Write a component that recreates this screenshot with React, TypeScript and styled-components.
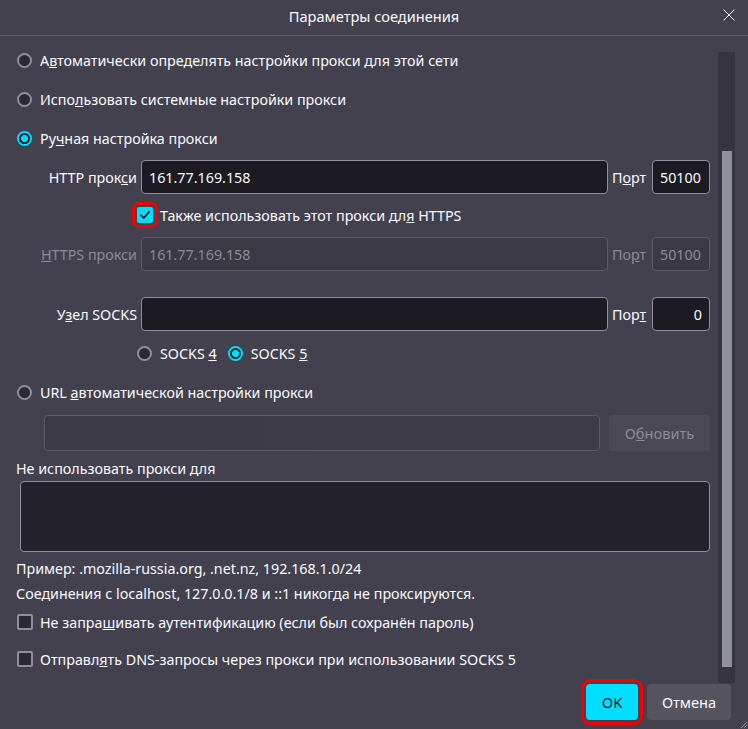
import React from "react";
import styled, { createGlobalStyle } from "styled-components";

const GlobalStyle = createGlobalStyle`
  html, body {
    margin: 0;
    padding: 0;
    background: #42414d;
  }
  body {
    font-family: "Noto Sans", "Open Sans", sans-serif;
    color: #fbfbfe;
  }
  * {
    box-sizing: border-box;
  }
`;

const Dialog = styled.div`
  position: relative;
  width: 748px;
  height: 729px;
  background: #42414d;
  display: flex;
  flex-direction: column;
  overflow: hidden;
  font-size: 14.3px;
`;

const TitleBar = styled.div`
  position: relative;
  height: 36px;
  flex-shrink: 0;
  display: flex;
  align-items: center;
  justify-content: center;
  border-bottom: 1px solid #5e5d69;
  font-size: 14.6px;
  padding-bottom: 4px;
`;

const CloseButton = styled.div`
  position: absolute;
  right: 12px;
  top: 8px;
  width: 14px;
  height: 14px;
  display: flex;
  align-items: center;
  justify-content: center;
`;

const Body = styled.div`
  display: flex;
  flex-direction: row;
  height: 647px;
`;

const Content = styled.div`
  width: 718px;
  padding: 5px 8px 0 16px;
  display: flex;
  flex-direction: column;
`;

const ScrollTrack = styled.div`
  width: 17px;
  margin-top: 16px;
  background: #35343f;
  padding: 99px 3px 16px 4px;
  display: flex;
`;

const ScrollThumb = styled.div`
  flex: 1;
  background: #8f8f9d;
`;

const Row = styled.div<{ $h: number; $mt?: number; $pl?: number; $gap?: number }>`
  display: flex;
  align-items: center;
  height: ${({ $h }) => $h}px;
  margin-top: ${({ $mt }) => $mt || 0}px;
  padding-left: ${({ $pl }) => $pl || 0}px;
  gap: ${({ $gap }) => $gap || 0}px;
  flex-shrink: 0;
`;

const Label = styled.span<{ $disabled?: boolean }>`
  color: ${({ $disabled }) => ($disabled ? "#8c8b94" : "#fbfbfe")};
  white-space: nowrap;
`;

const Choice = styled.label`
  display: flex;
  align-items: center;
  gap: 8px;
  white-space: nowrap;
`;

const Radio = styled.span<{ $on?: boolean }>`
  width: 15px;
  height: 15px;
  border-radius: 50%;
  flex-shrink: 0;
  margin-left: 1px;
  border: 2px solid ${({ $on }) => ($on ? "#00ddff" : "#8f8f9d")};
  background: ${({ $on }) =>
    $on
      ? "radial-gradient(circle, #00ddff 0 3.2px, #1c1b22 3.8px)"
      : "#2b2a33"};
`;

const Check = styled.span<{ $on?: boolean; $framed?: boolean }>`
  width: 16px;
  height: 16px;
  border-radius: 2px;
  flex-shrink: 0;
  margin-left: 1px;
  margin-right: -1px;
  display: flex;
  align-items: center;
  justify-content: center;
  border: 2px solid ${({ $on }) => ($on ? "#00ddff" : "#8f8f9d")};
  background: ${({ $on }) => ($on ? "#00ddff" : "#2b2a33")};
  outline: ${({ $framed }) => ($framed ? "3px solid #f40000" : "none")};
  outline-offset: 2px;
`;

const ProxyGrid = styled.div<{ $mt: number }>`
  display: grid;
  grid-template-columns: 121px 1fr 36px 58px;
  column-gap: 4px;
  align-items: center;
  height: 34px;
  margin-top: ${({ $mt }) => $mt}px;
  flex-shrink: 0;
`;

const GridLabel = styled.span<{ $disabled?: boolean; $left?: boolean }>`
  text-align: ${({ $left }) => ($left ? "left" : "right")};
  color: ${({ $disabled }) => ($disabled ? "#8c8b94" : "#fbfbfe")};
  white-space: nowrap;
`;

const Field = styled.div<{ $disabled?: boolean; $right?: boolean; $h?: number }>`
  height: ${({ $h }) => $h || 34}px;
  border-radius: 4px;
  border: 1px solid ${({ $disabled }) => ($disabled ? "#5b5a66" : "#8f8f9d")};
  background: ${({ $disabled }) => ($disabled ? "#3a3944" : "#1c1b22")};
  color: ${({ $disabled }) => ($disabled ? "#8c8b94" : "#fbfbfe")};
  display: flex;
  align-items: center;
  justify-content: ${({ $right }) => ($right ? "flex-end" : "flex-start")};
  padding: 0 7px;
  white-space: nowrap;
  flex-shrink: 0;
`;

const UrlField = styled(Field)`
  flex: 1;
  background: linear-gradient(90deg, #3a3944, #3d3c47);
`;

const Button = styled.div<{ $variant?: "primary" | "disabled" | "normal"; $w: number }>`
  width: ${({ $w }) => $w}px;
  height: 36px;
  border-radius: 4px;
  display: flex;
  align-items: center;
  justify-content: center;
  flex-shrink: 0;
  font-size: 14.6px;
  background: ${({ $variant }) =>
    $variant === "primary" ? "#00ddff" : $variant === "disabled" ? "#4a4955" : "#55545f"};
  color: ${({ $variant }) =>
    $variant === "primary" ? "#15141a" : $variant === "disabled" ? "#8c8b94" : "#fbfbfe"};
`;

const FramedButton = styled(Button)`
  outline: 3px solid #f40000;
  outline-offset: 2px;
`;

const TextArea = styled.div`
  height: 71px;
  margin-left: 4px;
  border-radius: 4px;
  border: 1px solid #8f8f9d;
  background: #23222b;
  flex-shrink: 0;
`;

const Footer = styled.div`
  display: flex;
  justify-content: flex-end;
  align-items: flex-start;
  gap: 9px;
  padding: 1px 17px 0 0;
  height: 46px;
`;

const Grip = styled.svg`
  position: absolute;
  right: 0;
  bottom: 0;
`;

const CheckMark = () => (
  <svg width="12" height="12" viewBox="0 0 12 12">
    <path d="M2 6.3 L4.8 9 L10 3" fill="none" stroke="#15141a" strokeWidth="1.8" strokeLinecap="round" strokeLinejoin="round" />
  </svg>
);

export default function App() {
  return (
    <>
      <GlobalStyle />
      <Dialog>
        <TitleBar>
          Параметры соединения
          <CloseButton>
            <svg width="12" height="12" viewBox="0 0 12 12">
              <path d="M0.5 0.5 L11.5 11.5 M11.5 0.5 L0.5 11.5" stroke="#fbfbfe" strokeWidth="1" />
            </svg>
          </CloseButton>
        </TitleBar>
        <Body>
          <Content>
            <Row $h={39}>
              <Choice>
                <Radio />
                <span>
                  А<u>в</u>томатически определять настройки прокси для этой сети
                </span>
              </Choice>
            </Row>
            <Row $h={39}>
              <Choice>
                <Radio />
                <span>
                  Испо<u>л</u>ьзовать системные настройки прокси
                </span>
              </Choice>
            </Row>
            <Row $h={39}>
              <Choice>
                <Radio $on />
                <span>
                  Ру<u>ч</u>ная настройка прокси
                </span>
              </Choice>
            </Row>

            <ProxyGrid $mt={2}>
              <GridLabel>
                HTTP прок<u>с</u>и
              </GridLabel>
              <Field>161.77.169.158</Field>
              <GridLabel $left>
                П<u>о</u>рт
              </GridLabel>
              <Field>50100</Field>
            </ProxyGrid>

            <Row $h={34} $mt={4} $pl={120}>
              <Choice>
                <Check $on $framed>
                  <CheckMark />
                </Check>
                <span>
                  Также использовать этот прокси дл<u>я</u> HTTPS
                </span>
              </Choice>
            </Row>

            <ProxyGrid $mt={5}>
              <GridLabel $disabled>
                <u>H</u>TTPS прокси
              </GridLabel>
              <Field $disabled>161.77.169.158</Field>
              <GridLabel $left $disabled>
                По<u>р</u>т
              </GridLabel>
              <Field $disabled>50100</Field>
            </ProxyGrid>

            <ProxyGrid $mt={26}>
              <GridLabel>
                У<u>з</u>ел SOCKS
              </GridLabel>
              <Field />
              <GridLabel $left>
                Пор<u>т</u>
              </GridLabel>
              <Field $right>0</Field>
            </ProxyGrid>

            <Row $h={34} $mt={5} $pl={120} $gap={10}>
              <Choice>
                <Radio />
                <span>
                  SOCKS <u>4</u>
                </span>
              </Choice>
              <Choice>
                <Radio $on />
                <span>
                  SOCKS <u>5</u>
                </span>
              </Choice>
            </Row>

            <Row $h={38} $mt={3}>
              <Choice>
                <Radio />
                <span>
                  URL <u>а</u>втоматической настройки прокси
                </span>
              </Choice>
            </Row>

            <Row $h={36} $mt={4} $pl={28} $gap={9}>
              <UrlField $disabled $h={36} />
              <Button $variant="disabled" $w={101}>
                <span>
                  О<u>б</u>новить
                </span>
              </Button>
            </Row>

            <Row $h={26} $mt={4}>
              <Label>
                Не использовать прокси <u>д</u>ля
              </Label>
            </Row>
            <TextArea />

            <Row $h={26} $mt={3}>
              <Label>Пример: .mozilla-russia.org, .net.nz, 192.168.1.0/24</Label>
            </Row>
            <Row $h={24}>
              <Label>Соединения с localhost, 127.0.0.1/8 и ::1 никогда не проксируются.</Label>
            </Row>

            <Row $h={34}>
              <Choice>
                <Check />
                <span>
                  Не запра<u>ш</u>ивать аутентификацию (если был сохранён пароль)
                </span>
              </Choice>
            </Row>
            <Row $h={38} $mt={1}>
              <Choice>
                <Check />
                <span>
                  Отправл<u>я</u>ть DNS-запросы через прокси при использовании SOCKS 5
                </span>
              </Choice>
            </Row>
          </Content>
          <ScrollTrack>
            <ScrollThumb />
          </ScrollTrack>
        </Body>
        <Footer>
          <FramedButton $variant="primary" $w={52}>
            OK
          </FramedButton>
          <Button $w={84}>Отмена</Button>
        </Footer>
        <Grip width="10" height="10" viewBox="0 0 10 10">
          <path d="M9 3 L3 9 M9 6 L6 9" stroke="#8f8f9d" strokeWidth="1" />
        </Grip>
      </Dialog>
    </>
  );
}
